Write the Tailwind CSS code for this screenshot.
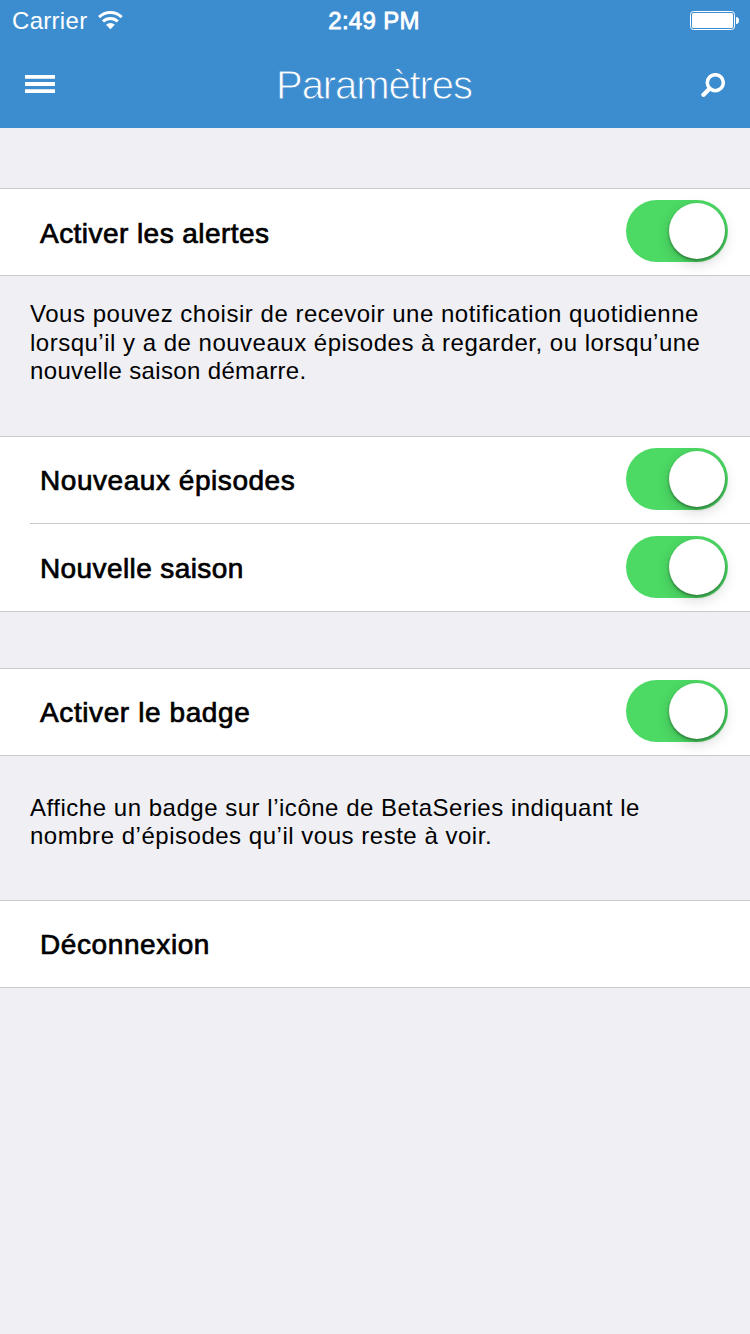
<!DOCTYPE html>
<html lang="fr">
<head>
<meta charset="utf-8">
<title>Paramètres</title>
<script src="https://cdn.jsdelivr.net/npm/@tailwindcss/browser@4"></script>
</head>
<body class="w-[750px] h-[1334px] overflow-hidden bg-[#efeff4] text-black font-['Liberation_Sans',Arial,sans-serif]">
  <header class="h-32 bg-[#3c8dd0] text-white">
    <div class="h-10 grid grid-cols-3 items-center text-2xl leading-[38px]">
      <div class="flex items-center pl-3 gap-[10px]">
        <span class="tracking-[0.3px] pt-[2px]">Carrier</span>
        <svg class="w-[26px] h-5" viewBox="0 0 26 20" fill="none" stroke="#fff">
          <path d="M2.1 7.1A16 16 0 0 1 24.7 7.1" stroke-width="3.1"/>
          <path d="M6 11.4A10.6 10.6 0 0 1 20.8 11.4" stroke-width="3"/>
          <path d="M9 14.8A6.2 6.2 0 0 1 17.8 14.8L13.4 19.3Z" fill="#fff" stroke="none"/>
        </svg>
      </div>
      <span class="text-center pt-[2px] pr-[2px] tracking-[0.3px] [-webkit-text-stroke:0.8px_#fff]">2:49 PM</span>
      <div class="flex justify-end pr-[10px]">
        <svg class="w-[50px] h-5" viewBox="0 0 50 20">
          <rect x="0.5" y="1.5" width="44" height="18" rx="3" fill="none" stroke="#fff"/>
          <rect x="2" y="3" width="41" height="15" rx="1.5" fill="#fff"/>
          <path d="M46 7Q49 7 49 10.5Q49 14 46 14Z" fill="#fff"/>
        </svg>
      </div>
    </div>
    <div class="h-[88px] grid grid-cols-3 items-center px-[25px] pt-[2px]">
      <svg class="w-[30px] h-[18px] mt-[-2px]" viewBox="0 0 30 18" fill="#fff"><path d="M0 0H30V3.7H0ZM0 7.1H30V10.9H0ZM0 14.3H30V18H0Z"/></svg>
      <h1 class="text-center text-[40px] leading-[86px] pr-[2px] tracking-[-1.1px] [-webkit-text-stroke:0.9px_#3c8dd0]">Paramètres</h1>
      <svg class="w-6 h-6 justify-self-end" viewBox="0 0 24 24" fill="none" stroke="#fff">
        <circle cx="14.3" cy="9.7" r="8" stroke-width="3.5"/>
        <path d="M8.5 15.7L2.5 21.7" stroke-width="4.4" stroke-linecap="round"/>
      </svg>
    </div>
  </header>

  <main>
    <section class="mt-15 h-22 bg-white border-y border-[#c8c7cc] flex items-center justify-between pl-10 pr-[22px]">
      <span class="text-[28px] tracking-[0.45px] pt-1 [-webkit-text-stroke:0.7px_#000]">Activer les alertes</span>
      <span class="w-[102px] h-[62px] mt-[-2px] rounded-full bg-[#4cd964] flex justify-end p-[3px]"><span class="size-14 rounded-full bg-white shadow-[0_5px_14px_rgba(0,0,0,0.16),0_2px_3px_rgba(0,0,0,0.35)]"></span></span>
    </section>
    <p class="h-40 pt-6 pl-[30px] text-2xl leading-[28.5px] tracking-[0.52px]">Vous pouvez choisir de recevoir une notification quotidienne<br><span class="tracking-[0.5px]">lorsqu’il y a de nouveaux épisodes à regarder, ou lorsqu’une</span><br><span class="tracking-[0.35px]">nouvelle saison démarre.</span></p>

    <section class="h-44 bg-white border-y border-[#c8c7cc]">
      <div class="h-[87px] pl-[30px] flex">
        <div class="flex-1 border-b border-[#c8c7cc] flex items-center justify-between pl-[10px] pr-[22px]">
          <span class="text-[28px] tracking-[0.55px] pt-[2px] [-webkit-text-stroke:0.7px_#000]">Nouveaux épisodes</span>
          <span class="w-[102px] h-[62px] mt-[-2px] rounded-full bg-[#4cd964] flex justify-end p-[3px]"><span class="size-14 rounded-full bg-white shadow-[0_5px_14px_rgba(0,0,0,0.16),0_2px_3px_rgba(0,0,0,0.35)]"></span></span>
        </div>
      </div>
      <div class="h-[87px] flex items-center justify-between pl-10 pr-[22px]">
        <span class="text-[28px] tracking-[0.4px] pt-[2px] [-webkit-text-stroke:0.7px_#000]">Nouvelle saison</span>
        <span class="w-[102px] h-[62px] mt-[-2px] rounded-full bg-[#4cd964] flex justify-end p-[3px]"><span class="size-14 rounded-full bg-white shadow-[0_5px_14px_rgba(0,0,0,0.16),0_2px_3px_rgba(0,0,0,0.35)]"></span></span>
      </div>
    </section>

    <section class="mt-14 h-22 bg-white border-y border-[#c8c7cc] flex items-center justify-between pl-10 pr-[22px]">
      <span class="text-[28px] tracking-[0.6px] pt-[2px] [-webkit-text-stroke:0.7px_#000]">Activer le badge</span>
      <span class="w-[102px] h-[62px] mt-[-2px] rounded-full bg-[#4cd964] flex justify-end p-[3px]"><span class="size-14 rounded-full bg-white shadow-[0_5px_14px_rgba(0,0,0,0.16),0_2px_3px_rgba(0,0,0,0.35)]"></span></span>
    </section>
    <p class="h-36 pt-[38px] pl-[30px] text-2xl leading-7 tracking-[0.52px]">Affiche un badge sur l’icône de BetaSeries indiquant le<br>nombre d’épisodes qu’il vous reste à voir.</p>

    <section class="h-22 bg-white border-y border-[#c8c7cc] flex items-center pl-10">
      <span class="text-[28px] tracking-[0.6px] pt-[2px] [-webkit-text-stroke:0.7px_#000]">Déconnexion</span>
    </section>
  </main>
</body>
</html>
